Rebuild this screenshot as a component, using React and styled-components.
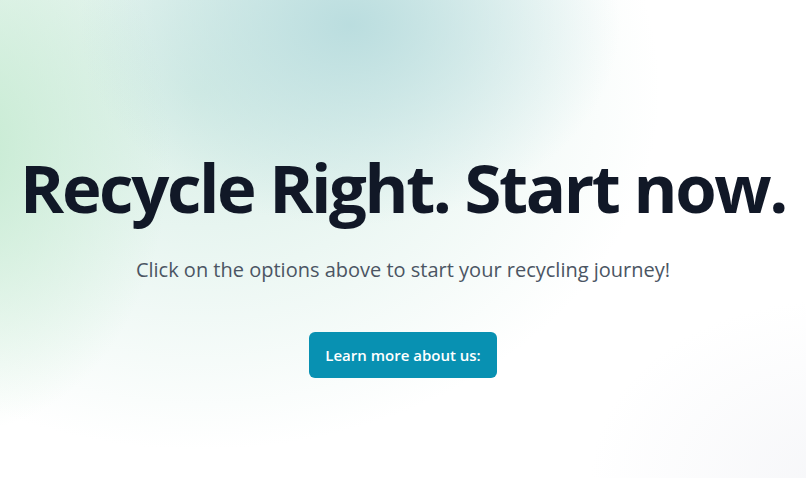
import React from "react";
import styled, { createGlobalStyle } from "styled-components";

const GlobalStyle = createGlobalStyle`
  * {
    box-sizing: border-box;
  }

  body {
    margin: 0;
    background: #ffffff;
    font-family: "Open Sans", "Noto Sans", "DejaVu Sans", sans-serif;
  }
`;

export const Hero = styled.section`
  height: 478px;
  overflow: hidden;
  display: flex;
  flex-direction: column;
  align-items: center;
  padding-top: 154px;
  background:
    radial-gradient(ellipse 270px 200px at 350px 25px, rgba(184, 220, 222, 0.95), rgba(184, 220, 222, 0) 100%),
    radial-gradient(ellipse 200px 280px at -30px 150px, rgba(196, 234, 208, 0.95), rgba(196, 234, 208, 0) 100%),
    radial-gradient(ellipse 460px 360px at 200px 90px, rgba(212, 237, 228, 0.9), rgba(212, 237, 228, 0) 100%),
    radial-gradient(ellipse 240px 180px at 830px 480px, rgba(240, 241, 245, 0.6), rgba(240, 241, 245, 0) 100%),
    #ffffff;
`;

export const Title = styled.h1`
  margin: 0;
  font-size: 67px;
  line-height: 1;
  font-weight: 700;
  letter-spacing: -2.4px;
  color: #111827;
  white-space: nowrap;
`;

export const Subtitle = styled.p`
  margin: 35px 0 0;
  font-size: 20px;
  line-height: 28px;
  color: #4b5563;
`;

export const ActionButton = styled.button`
  margin-top: 48px;
  padding: 12px 16px;
  border: none;
  border-radius: 6px;
  background: #0891b2;
  color: #ffffff;
  font-family: inherit;
  font-size: 15px;
  font-weight: 600;
  line-height: 22px;
  cursor: pointer;
`;

function App() {
  return (
    <>
      <GlobalStyle />
      <Hero>
        <Title>Recycle Right. Start now.</Title>
        <Subtitle>Click on the options above to start your recycling journey!</Subtitle>
        <ActionButton>Learn more about us:</ActionButton>
      </Hero>
    </>
  );
}

export default App;
